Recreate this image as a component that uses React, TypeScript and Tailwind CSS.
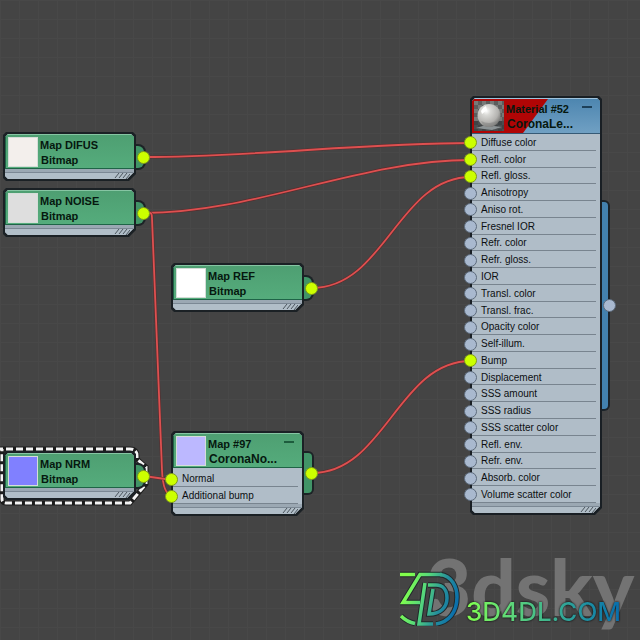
import React from "react";

const WIRES = [
  "M144 157 C250 157 365 143 471 143",
  "M144 213 C255 213 360 160 471 160",
  "M144 213 H150 Q152 213 152 218 L162 470 Q163 495 172 495",
  "M312 288 C385 288 398 177 471 177",
  "M312 473 C385 473 398 361 471 361",
  "M144 476 L172 480",
];

const MATERIAL_SLOTS = [
  "Diffuse color",
  "Refl. color",
  "Refl. gloss.",
  "Anisotropy",
  "Aniso rot.",
  "Fresnel IOR",
  "Refr. color",
  "Refr. gloss.",
  "IOR",
  "Transl. color",
  "Transl. frac.",
  "Opacity color",
  "Self-illum.",
  "Bump",
  "Displacement",
  "SSS amount",
  "SSS radius",
  "SSS scatter color",
  "Refl. env.",
  "Refr. env.",
  "Absorb. color",
  "Volume scatter color",
];

const CONNECTED = new Set(["Diffuse color", "Refl. color", "Refl. gloss.", "Bump", "Normal", "Additional bump"]);

const CUT =
  "[clip-path:polygon(3px_0,calc(100%-3px)_0,100%_3px,100%_calc(100%-7px),calc(100%-7px)_100%,3px_100%,0_calc(100%-3px),0_3px)]";

function Port({ on, className }: { on: boolean; className: string }) {
  return (
    <span
      className={`absolute size-[13px] rounded-full border ${
        on ? "border-[#7f9a1c] bg-[#ccff00]" : "border-[#5d6b7c] bg-[#a9b9cf]"
      } ${className}`}
    />
  );
}

function Footer() {
  return (
    <div className="flex h-2.5 flex-col bg-[#b1bec8]">
      <div className="h-1 border-b border-[#7b8894] bg-[#9ba8b3]" />
      <svg className="ml-auto mr-1 h-1.5 w-4" viewBox="0 0 16 6" fill="none" stroke="#4b545c" aria-hidden="true">
        <path d="M1 5 5 0M5 5 9 0M9 5 13 0M12 6 16 1" />
      </svg>
    </div>
  );
}

function Slots({ names, className }: { names: string[]; className: string }) {
  return (
    <ul className={`flex flex-col ${className}`}>
      {names.map((name) => (
        <li key={name} className="relative flex flex-1 items-center pt-px">
          <span className="pl-[9px] text-[10px] leading-3 text-[#0c0f11]">{name}</span>
          <span className="absolute bottom-0 left-0 right-1 h-px bg-[#78848f]" />
        </li>
      ))}
    </ul>
  );
}

function SlotPorts({ names, className }: { names: string[]; className: string }) {
  return (
    <div className={`absolute left-0 flex flex-col ${className}`}>
      {names.map((name) => (
        <div key={name} className="relative flex flex-1 items-center pt-px">
          <Port on={CONNECTED.has(name)} className="-left-1.5" />
        </div>
      ))}
    </div>
  );
}

function CollapseButton({ dark }: { dark: string }) {
  return (
    <button type="button" aria-label="Collapse node" className="absolute right-2 top-1 flex h-2 w-2.5 items-center">
      <span className={`h-0.5 w-full ${dark}`} />
    </button>
  );
}

function Title({ lines, large }: { lines: [string, string]; large?: boolean }) {
  return (
    <h2 className="relative whitespace-nowrap text-[11px] font-bold leading-4 text-[#06180f]">
      <span className="block">{lines[0]}</span>
      <span className={`block pl-px ${large ? "text-[12px] leading-[14px]" : "leading-[15px]"}`}>{lines[1]}</span>
    </h2>
  );
}

interface MapNodeProps {
  lines: [string, string];
  place: string;
  thumb: string;
  slots?: string[];
}

function MapNode({ lines, place, thumb, slots }: MapNodeProps) {
  return (
    <article className={`absolute w-[133px] ${place}`}>
      <span
        className={`absolute -right-2.5 w-5 bg-[#1c2326] p-0.5 ${
          slots ? "top-5 h-[44px] rounded-md" : "top-3 h-[26px] rounded-lg"
        }`}
      >
        <span className={`block h-full bg-[#419467] ${slots ? "rounded-sm" : "rounded-md"}`} />
      </span>
      <div className={`relative bg-[#1b2125] p-0.5 ${CUT}`}>
        <div className={`bg-[#b0bdc8] ${CUT}`}>
          <div className="relative flex h-[35px] gap-0.5 border-b border-l border-t border-[#1f6447] border-t-[#86c5a3] bg-linear-to-b from-[#4e9f72] to-[#55ac7c] pl-0.5 pt-0.5">
            <span className={`size-[30px] border border-[#d5ddd8] ${thumb}`} />
            <Title lines={lines} large={Boolean(slots)} />
            {slots && <CollapseButton dark="bg-[#1d5c3d]" />}
          </div>
          {slots && <Slots names={slots} className="h-9 pt-0.5" />}
          <Footer />
        </div>
      </div>
      <Port on className={`-right-3.5 ${slots ? "top-9" : "top-[19px]"}`} />
      {slots && <SlotPorts names={slots} className="top-[37px] h-9 pt-0.5" />}
    </article>
  );
}

function SphereThumb() {
  return (
    <svg className="relative size-[30px]" viewBox="0 0 30 30" aria-hidden="true">
      <defs>
        <pattern id="checks" width="8" height="8" patternUnits="userSpaceOnUse">
          <rect width="8" height="8" fill="#5b5d5d" />
          <path d="M0 0h4v4H0zM4 4h4v4H4z" fill="#777a79" />
        </pattern>
        <radialGradient id="sphere" cx="0.38" cy="0.3" r="0.75">
          <stop offset="0" stopColor="#fff" />
          <stop offset="0.25" stopColor="#d9d9d6" />
          <stop offset="0.7" stopColor="#b3b2af" />
          <stop offset="1" stopColor="#6f6f6d" />
        </radialGradient>
      </defs>
      <rect width="30" height="30" fill="url(#checks)" />
      <path d="M0 20h30v10H0z" fill="#33383b" opacity="0.65" />
      <path d="M2 27 12 24l16 2-10 3z" fill="#8c9395" />
      <circle cx="15" cy="14.500" r="11.500" fill="url(#sphere)" />
      <path d="M7 10q2-4 5-5l1 4-5 4z" fill="#fff" />
      <path d="M7 20q8 4 16 0-3 6-8 6t-8-6z" fill="#8b8b88" opacity="0.6" />
    </svg>
  );
}

function MaterialNode() {
  return (
    <article className="absolute left-[470px] top-24 w-[132px]">
      <span className="absolute -right-2 top-[104px] h-[211px] w-5 rounded-md bg-[#1b2329] p-0.5">
        <span className="block h-full rounded-sm bg-[#4381ae]" />
      </span>
      <div className={`relative bg-[#191f24] p-0.5 ${CUT}`}>
        <div className={`bg-[#b0bdc8] ${CUT}`}>
          <div className="relative flex h-[36px] gap-0.5 border-b border-t border-b-[#365a75] border-t-[#9fc3dc] bg-linear-to-b from-[#4d86b0] to-[#70a0c3] pl-0.5 pt-0.5">
            <span className="absolute inset-y-0 left-0 w-[76px] bg-[#b00505] [clip-path:polygon(0_0,100%_0,51px_100%,0_100%)]" />
            <SphereThumb />
            <Title lines={["Material #52", "CoronaLe..."]} large />
            <CollapseButton dark="bg-[#1d4059]" />
          </div>
          <Slots names={MATERIAL_SLOTS} className="h-[369px]" />
          <Footer />
        </div>
      </div>
      <SlotPorts names={MATERIAL_SLOTS} className="top-[38px] h-[369px]" />
      <Port on={false} className="-right-3.5 top-[203px]" />
    </article>
  );
}

function Wires() {
  return (
    <svg className="pointer-events-none absolute left-0 top-0 size-[640px]" viewBox="0 0 640 640" fill="none" aria-hidden="true">
      {WIRES.map((d) => (
        <g key={d}>
          <path d={d} stroke="#5a2c2d" strokeWidth="3" />
          <path d={d} stroke="#dd5050" strokeWidth="1.800" />
        </g>
      ))}
    </svg>
  );
}

function SelectionOutline() {
  const d = "M-4 449H130Q137 449 137 456V459L146 467V484L130 503H6Q2 503 2 499V449";
  return (
    <svg className="pointer-events-none absolute left-0 top-0 size-[640px]" viewBox="0 0 640 640" fill="none" aria-hidden="true">
      <path d={d} stroke="#1c1c1c" strokeWidth="5" />
      <path d={d} stroke="#f4f4f4" strokeWidth="3" strokeDasharray="7 3" />
    </svg>
  );
}

function LogoMark() {
  const strokes = (
    <>
      <path d="M0 4.500H15" />
      <path d="M42 4.500H20L3 32.500H20" />
      <path d="M40 4.500C52 6 57 17 57 27C57 42 49 52 36 54" />
      <path d="M25 13 19 54H33" />
      <path d="M28 15H36C43 15 47 20 47 28C47 38 40 44 29 44L33 19" />
      <path d="M1 46Q7 52 15 53.500" />
    </>
  );
  return (
    <svg className="h-14 w-[62px] shrink-0" viewBox="0 0 62 56" fill="none" aria-hidden="true">
      <defs>
        <linearGradient id="mark" gradientUnits="userSpaceOnUse" x1="4" y1="20" x2="58" y2="36">
          <stop offset="0" stopColor="#82ff4c" />
          <stop offset="0.35" stopColor="#56d87b" />
          <stop offset="0.68" stopColor="#258f9b" />
          <stop offset="1" stopColor="#086cad" />
        </linearGradient>
      </defs>
      <g stroke="#20282a" strokeWidth="5.500">{strokes}</g>
      <g stroke="url(#mark)" strokeWidth="3.500">{strokes}</g>
    </svg>
  );
}

export default function App() {
  return (
    <main className="relative min-h-screen overflow-hidden bg-[#444444] bg-[linear-gradient(to_right,#484848_1px,transparent_1px),linear-gradient(to_bottom,#484848_1px,transparent_1px)] bg-size-[19px_19px] font-['Liberation_Sans',Arial,sans-serif]">
      <Wires />
      <SelectionOutline />
      <MapNode lines={["Map DIFUS", "Bitmap"]} place="left-[3px] top-[132px]" thumb="bg-[#f3efec]" />
      <MapNode lines={["Map NOISE", "Bitmap"]} place="left-[3px] top-[188px]" thumb="bg-[#dedede]" />
      <MapNode lines={["Map REF", "Bitmap"]} place="left-[171px] top-[263px]" thumb="bg-white" />
      <MapNode lines={["Map NRM", "Bitmap"]} place="left-[3px] top-[451px]" thumb="bg-[#8080ff]" />
      <MapNode
        lines={["Map #97", "CoronaNo..."]}
        place="left-[171px] top-[431px]"
        thumb="bg-[#bcb8ff]"
        slots={["Normal", "Additional bump"]}
      />
      <MaterialNode />
      <p className="absolute left-[426px] top-[538px] font-['Lato',sans-serif] text-[78px] font-black leading-[96px] text-[#737373]">
        3dsky
      </p>
      <div className="absolute left-[400px] top-[570px] flex items-end gap-1">
        <LogoMark />
        <span className="bg-linear-to-r from-[#82ff4c] via-[#43b98a] to-[#086cad] bg-clip-text font-['Inter',sans-serif] text-[26px] font-medium leading-7 text-transparent drop-shadow-[0_0_1px_#000000]">
          3D4DL.COM
        </span>
      </div>
    </main>
  );
}
